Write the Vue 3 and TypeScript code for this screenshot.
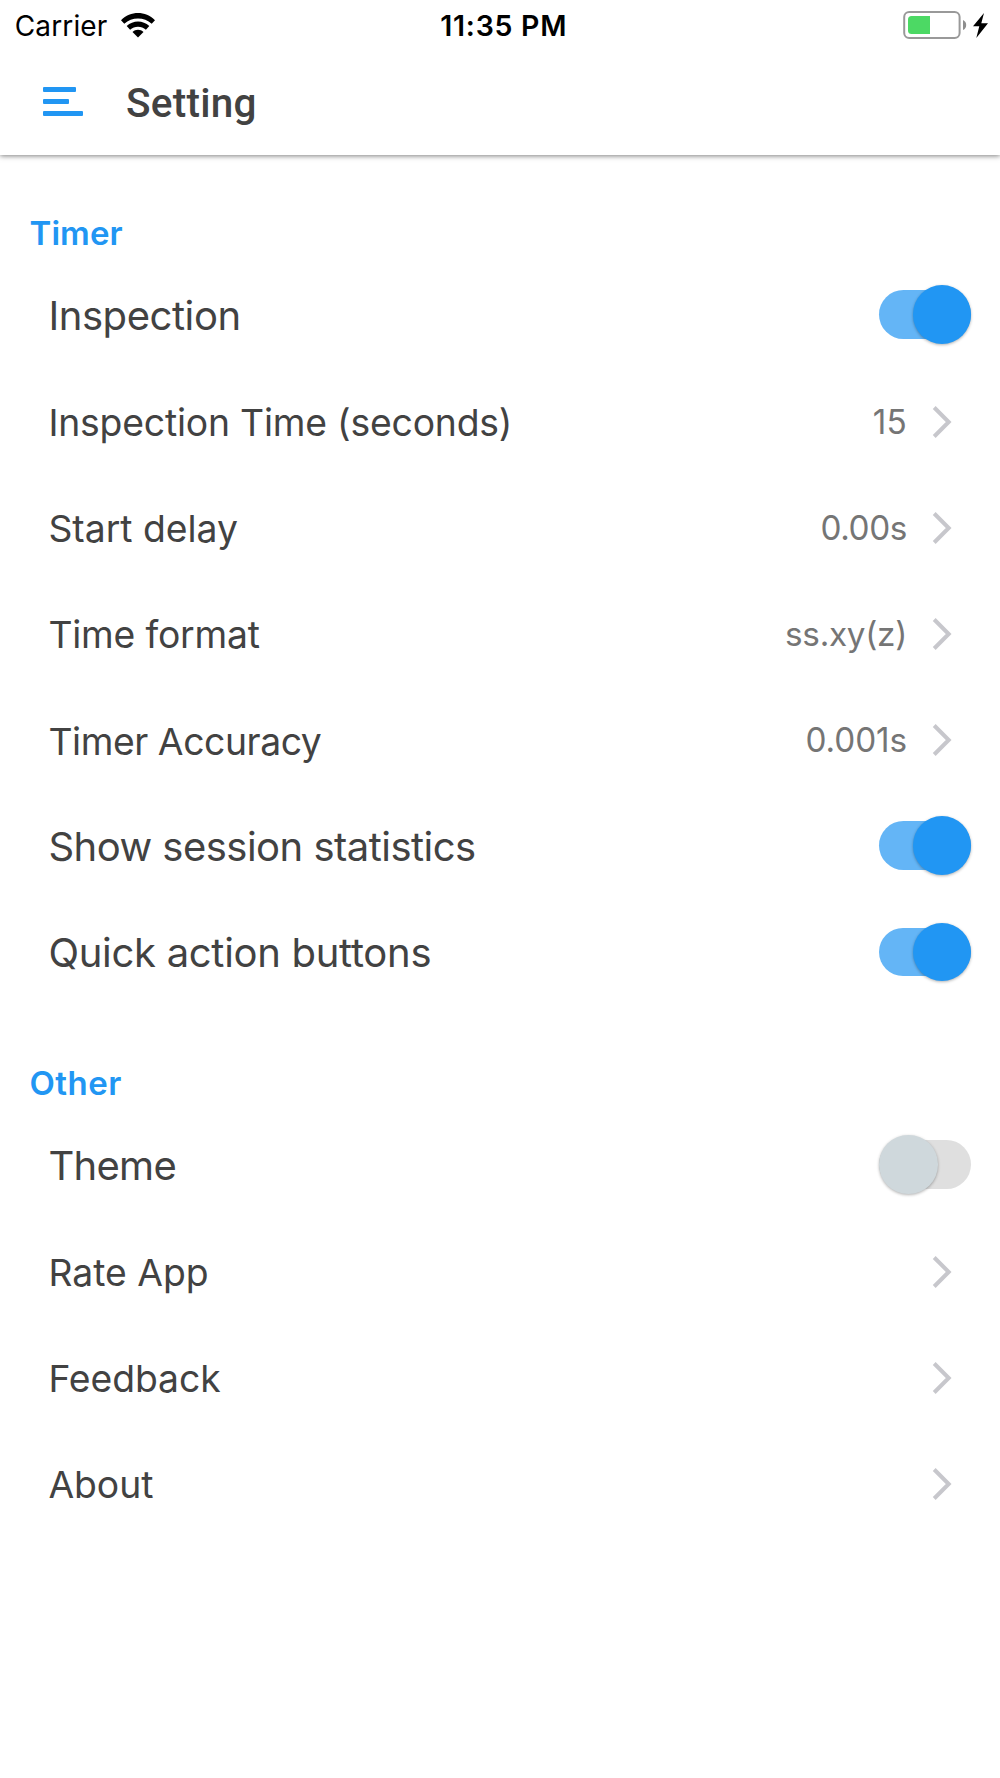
<script setup lang="ts">
import { ref } from 'vue'

interface Item {
  label: string
  spacing: number
  kind: 'toggle' | 'link'
  value?: string
  valueSpacing?: number
  on?: boolean
}
interface Section {
  title: string
  spacing: number
  items: Item[]
}

const sections = ref<Section[]>([
  {
    title: 'Timer',
    spacing: 0.1,
    items: [
      { label: 'Inspection', spacing: -0.43, kind: 'toggle', on: true },
      { label: 'Inspection Time (seconds)', spacing: -0.19, kind: 'link', value: '15', valueSpacing: 0.2 },
      { label: 'Start delay', spacing: 0, kind: 'link', value: '0.00s', valueSpacing: -0.4 },
      { label: 'Time format', spacing: -0.2, kind: 'link', value: 'ss.xy(z)', valueSpacing: -0.3 },
      { label: 'Timer Accuracy', spacing: -0.43, kind: 'link', value: '0.001s', valueSpacing: -0.1 },
      { label: 'Show session statistics', spacing: -0.52, kind: 'toggle', on: true },
      { label: 'Quick action buttons', spacing: -0.29, kind: 'toggle', on: true },
    ],
  },
  {
    title: 'Other',
    spacing: 0.5,
    items: [
      { label: 'Theme', spacing: -0.7, kind: 'toggle', on: false },
      { label: 'Rate App', spacing: 0, kind: 'link' },
      { label: 'Feedback', spacing: -0.08, kind: 'link' },
      { label: 'About', spacing: -0.05, kind: 'link' },
    ],
  },
])

function toggle(item: Item) {
  if (item.kind === 'toggle') item.on = !item.on
}
</script>

<template>
  <div class="screen">
    <header class="top">
      <div class="status">
        <div class="carrier">
          <span class="carrier-name">Carrier</span>
          <svg class="wifi" width="34" height="25" viewBox="0 0 34 25">
            <path d="M0 7.200C9.500-2.400 24.500-2.400 34 7.200L30.700 10.800C23.200 3.800 10.800 3.800 3.300 10.800Z" />
            <path d="M5.700 13.100C12 6.900 22 6.900 28.300 13.100L24.900 16.700C20.600 12.700 13.400 12.700 9.100 16.700Z" />
            <path d="M11.500 19C14.600 16.100 19.400 16.100 22.500 19L17 24.400Z" />
          </svg>
        </div>
        <span class="clock">11:35 PM</span>
        <div class="power">
          <svg width="86" height="30" viewBox="0 0 86 30">
            <rect x="1.200" y="2" width="55.400" height="26" rx="5" fill="none" stroke="#999" stroke-width="2" />
            <path d="M27 6V24H8.500Q5 24 5 20.500V9.500Q5 6 8.500 6Z" fill="#4cd964" />
            <path d="M60 10Q63.200 11.500 63.200 15T60 20Z" fill="#8e8e8e" />
            <path d="M81 3L70 16.200H76.300L73.300 28L85 13.200H78.300Z" fill="#000" />
          </svg>
        </div>
      </div>
      <div class="bar">
        <svg class="menu" width="40" height="29" viewBox="0 0 40 29">
          <rect width="33" height="5" rx="1" />
          <rect y="12" width="26" height="5" rx="1" />
          <rect y="24" width="40" height="5" rx="1" />
        </svg>
        <h1>Setting</h1>
      </div>
    </header>

    <main>
      <section v-for="s in sections" :key="s.title">
        <h2 :style="{ letterSpacing: s.spacing + 'px' }">{{ s.title }}</h2>
        <div v-for="item in s.items" :key="item.label" class="row" :class="item.kind" @click="toggle(item)">
          <span class="label" :style="{ letterSpacing: item.spacing + 'px' }">{{ item.label }}</span>
          <span v-if="item.kind === 'toggle'" class="switch" :class="{ on: item.on }">
            <span class="thumb"></span>
          </span>
          <template v-else>
            <span v-if="item.value" class="value" :style="{ letterSpacing: item.valueSpacing + 'px' }">{{ item.value }}</span>
            <svg class="chevron" width="20" height="34" viewBox="0 0 20 34">
              <path d="M2.200 2.500L16.700 17L2.200 31.500" />
            </svg>
          </template>
        </div>
      </section>
    </main>
  </div>
</template>

<style>
body {
  background: #fff;
}
</style>

<style scoped>
.screen {
  width: 1000px;
  height: 1778px;
  overflow: hidden;
  background: #fff;
  font-family: Inter, 'Liberation Sans', sans-serif;
  color: #424242;
}
.top {
  height: 155px;
  background: #fff;
  box-shadow: 0 1px 5px rgba(0, 0, 0, 0.5);
}
.status {
  height: 51px;
  display: grid;
  grid-template-columns: 1fr auto 1fr;
  align-items: center;
  color: #000;
  font-size: 28px;
  line-height: 51px;
}
.carrier {
  display: flex;
  align-items: center;
  padding-left: 14.800px;
}
.carrier-name {
  width: 106.200px;
  padding-top: 1px;
  letter-spacing: 0.120px;
  white-space: nowrap;
}
.wifi {
  margin-bottom: 2px;
}
.clock {
  font-size: 28.500px;
  font-weight: 600;
  letter-spacing: 0.750px;
  padding: 0 0 1px 7.500px;
}
.power {
  display: flex;
  justify-content: flex-end;
  padding: 0 11px 2px 0;
}
.bar {
  height: 104px;
  display: flex;
  align-items: center;
  padding-left: 42.800px;
}
.menu {
  fill: #2196f3;
  margin-bottom: 3px;
}
h1 {
  margin: 0 0 0 43.200px;
  font: 500 40.500px/104px Roboto, sans-serif;
  letter-spacing: 0.250px;
}
h2 {
  margin: 0;
  height: 106.250px;
  box-sizing: border-box;
  padding: 49px 0 0 29.500px;
  font-size: 33px;
  line-height: 56px;
  font-weight: 600;
  color: #2196f3;
}
main {
  padding-top: 1px;
}
.row {
  height: 106.250px;
  display: flex;
  align-items: center;
  padding-left: 48.400px;
}
.label {
  flex: 1;
  white-space: nowrap;
  font-size: 37.300px;
}
.link .label {
  padding-top: 1.500px;
}
.toggle .label {
  font-size: 40px;
}
.toggle {
  padding-right: 29px;
}
.link {
  padding-right: 48px;
}
.value {
  margin-right: 25px;
  font-size: 33.300px;
  color: #757575;
}
.chevron {
  fill: none;
  stroke: #c7c7cc;
  stroke-width: 4;
}
.switch {
  width: 92px;
  height: 48.500px;
  margin-bottom: 1.800px;
  border-radius: 25px;
  background: #dfdfdf;
  display: flex;
  align-items: center;
}
.switch.on {
  background: #64b5f6;
  justify-content: flex-end;
}
.thumb {
  flex: none;
  width: 58.500px;
  height: 58.500px;
  border-radius: 50%;
  background: #cfd8dc;
  box-shadow: 0 1px 3px rgba(0, 0, 0, 0.3);
}
.on .thumb {
  background: #2196f3;
}
</style>
